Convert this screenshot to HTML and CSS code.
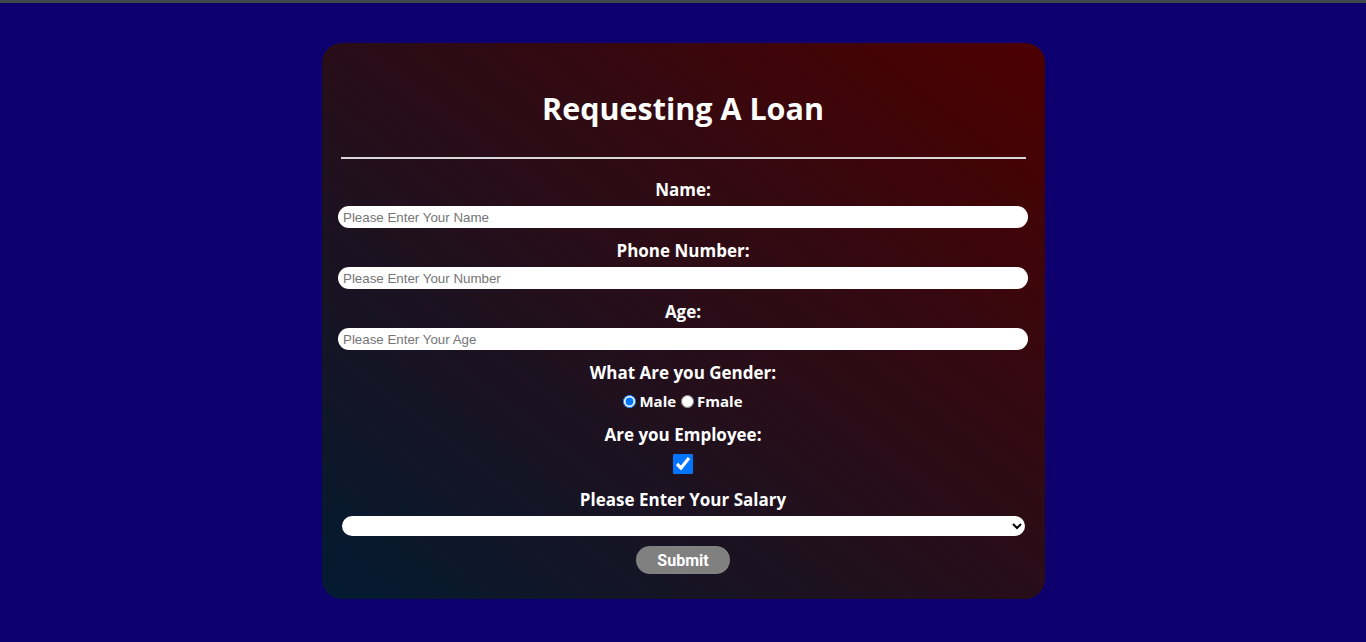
FILE: index.html
```html
<!DOCTYPE html>
<html>
<head>
<meta charset="utf-8">
<link rel="stylesheet" href="styles.css">
</head>
<body>
<div class="topbar"></div>
<main class="page">
  <form class="card">
    <h1 class="title">Requesting A Loan</h1>
    <hr class="rule">
    <label class="lbl lbl-first" for="name">Name:</label>
    <input class="field" id="name" type="text" placeholder="Please Enter Your Name">
    <label class="lbl" for="phone">Phone Number:</label>
    <input class="field" id="phone" type="text" placeholder="Please Enter Your Number">
    <label class="lbl" for="age">Age:</label>
    <input class="field" id="age" type="text" placeholder="Please Enter Your Age">
    <div class="lbl">What Are you Gender:</div>
    <div class="radios">
      <input class="radio" type="radio" name="g" id="male" checked><label for="male">Male</label>
      <input class="radio" type="radio" name="g" id="fmale"><label for="fmale">Fmale</label>
    </div>
    <div class="lbl lbl-emp">Are you Employee:</div>
    <input class="check" type="checkbox" checked>
    <div class="lbl lbl-sal">Please Enter Your Salary</div>
    <select class="sel"><option></option></select>
    <button class="submit" type="button">Submit</button>
  </form>
</main>
</body>
</html>
```
FILE: styles.css
```css
html, body {
  margin: 0;
  padding: 0;
}
body {
  background: #0d006e;
  font-family: "Open Sans", "Noto Sans", sans-serif;
  color: #fff;
  height: 642px;
  overflow: hidden;
}
.topbar {
  height: 3px;
  background: #3d4a4d;
}
.page {
  display: flex;
  justify-content: center;
  padding-top: 40px;
}
.card {
  width: 723px;
  box-sizing: border-box;
  border-radius: 20px;
  background: linear-gradient(to top right, #031b31, #4d0000);
  display: flex;
  flex-direction: column;
  align-items: center;
  padding: 45px 0 25px;
}
.title {
  margin: 0;
  font-size: 30.5px;
  line-height: 40px;
  font-weight: 700;
}
.rule {
  width: 685px;
  margin: 29px 0 0;
  border: none;
  border-top: 2px solid #d8d8d8;
  height: 0;
}
.lbl {
  font-size: 17px;
  font-weight: 700;
  line-height: 24px;
  margin-top: 11px;
  margin-bottom: 4px;
}
.lbl-first { margin-top: 19px; }
.field {
  width: 690px;
  height: 22px;
  box-sizing: border-box;
  border: none;
  border-radius: 11px;
  padding: 0 5px;
  font-family: "Liberation Sans", Arial, sans-serif;
  font-size: 13.33px;
  background: #fff;
  outline: none;
}
.field::placeholder { color: #757575; }
.radios {
  display: flex;
  align-items: center;
  height: 20px;
  margin-top: 2px;
  font-size: 15px;
  font-weight: 700;
}
.radio {
  width: 13px;
  height: 13px;
  margin: 0 3px 0 0;
}
.radios label + .radio { margin-left: 5px; }
.lbl-emp { margin-top: 12px; margin-bottom: 7px; }
.check {
  width: 20px;
  height: 20px;
  margin: 0;
}
.lbl-sal { margin-top: 14px; }
.sel {
  width: 683px;
  height: 20px;
  border: none;
  border-radius: 10px;
  background: #fff;
  font-size: 13px;
  margin: 0;
}
.submit {
  margin-top: 10px;
  width: 94px;
  height: 28px;
  border: none;
  border-radius: 14px;
  background: #808080;
  color: #fff;
  font-family: Roboto, "Liberation Sans", sans-serif;
  font-weight: 700;
  font-size: 16px;
}
```
